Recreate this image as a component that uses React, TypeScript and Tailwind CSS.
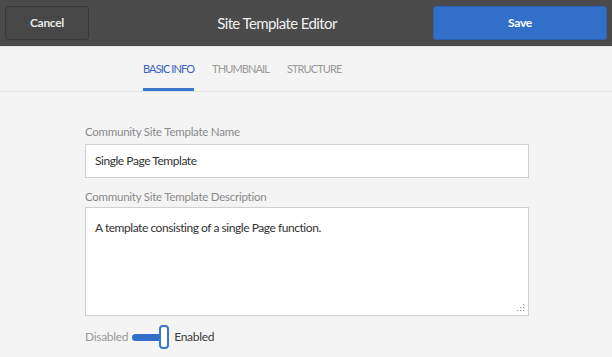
export default function App() {
  return (
    <div className="w-[612px] h-[357px] overflow-hidden bg-[#f4f4f4] font-['Lato','Liberation_Sans',sans-serif]">
      <header className="h-[47px] bg-[#4b4b4b] border-b border-[#e6e6e6] flex items-center justify-between px-[5px]">
        <button className="w-[84px] h-[34px] rounded-[3px] bg-[#474747] border border-[#393939] text-[#e6e6e6] text-[12px] font-bold tracking-[-0.3px]">
          Cancel
        </button>
        <h1 className="text-[#f0f0f0] text-[15px] tracking-[-0.6px] ml-[32px]">Site Template Editor</h1>
        <button className="w-[174px] h-[34px] rounded-[3px] bg-[#326fc8] border border-[#2b61b1] text-white text-[12px] font-bold tracking-[-0.3px]">
          Save
        </button>
      </header>
      <nav className="h-[45px] border-b border-[#e3e3e3] flex pl-[143px] gap-[18px]">
        <div className="flex items-center border-b-[3px] border-[#3a75cf] pt-[3px] text-[11px] text-[#3c63c2] tracking-[-0.9px]">BASIC INFO</div>
        <div className="flex items-center text-[11px] text-[#9a9a9a] tracking-[-0.9px]">THUMBNAIL</div>
        <div className="flex items-center text-[11px] text-[#9a9a9a] tracking-[-0.9px]">STRUCTURE</div>
      </nav>
      <main className="ml-[85px] pt-[32px] w-[444px]">
        <label className="block text-[11.5px] tracking-[-0.25px] text-[#8a8a8a] leading-[16px]">Community Site Template Name</label>
        <div className="mt-[4px] h-[34px] bg-white border border-[#d0d0d0] flex items-center px-[9px] text-[12px] tracking-[-0.45px] text-[#333]">
          Single Page Template
        </div>
        <label className="block mt-[11px] text-[11.5px] tracking-[-0.25px] text-[#8a8a8a] leading-[16px]">Community Site Template Description</label>
        <div className="relative mt-[2px] h-[109px] bg-white border border-[#d0d0d0] px-[9px] pt-[11px] text-[12px] tracking-[-0.45px] text-[#333]">
          A template consisting of a single Page function.
          <svg className="absolute right-[3px] bottom-[3px]" width="8" height="8" viewBox="0 0 8 8">
            <rect x="6" y="0" width="1.2" height="1.2" fill="#999" />
            <rect x="3" y="3" width="1.2" height="1.2" fill="#999" />
            <rect x="6" y="3" width="1.2" height="1.2" fill="#999" />
            <rect x="0" y="6" width="1.2" height="1.2" fill="#999" />
            <rect x="3" y="6" width="1.2" height="1.2" fill="#999" />
            <rect x="6" y="6" width="1.2" height="1.2" fill="#999" />
          </svg>
        </div>
        <div className="mt-[9px] flex items-center text-[12px] tracking-[-0.3px]">
          <span className="text-[#9a9a9a]">Disabled</span>
          <div className="relative ml-[4px] w-[36px] h-[24px] flex items-center">
            <div className="w-[30px] h-[7px] rounded-full bg-[#326fc8]" />
            <div className="absolute left-[27px] top-0 w-[10px] h-[24px] rounded-[4px] bg-white border-2 border-[#3a75cf]" />
          </div>
          <span className="ml-[6px] text-[#3a3a3a]">Enabled</span>
        </div>
      </main>
    </div>
  )
}
